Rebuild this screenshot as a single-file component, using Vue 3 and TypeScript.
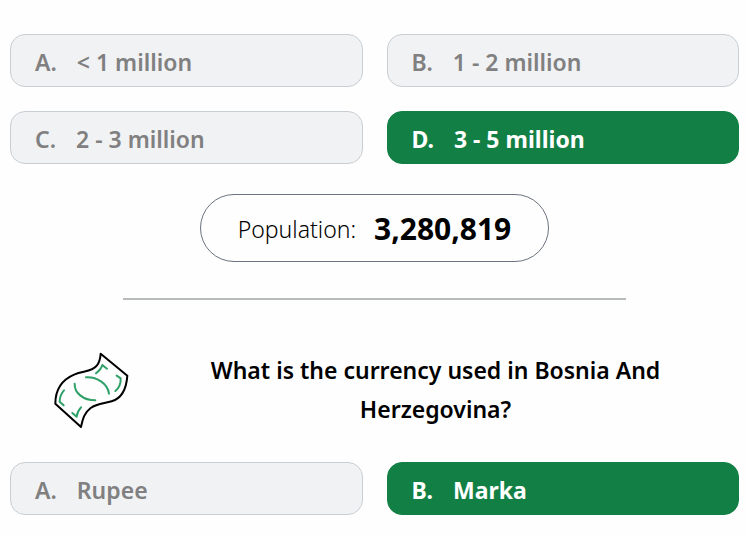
<script setup lang="ts">
interface Choice {
  letter: string
  text: string
  correct: boolean
}

const populationChoices: Choice[] = [
  { letter: 'A', text: '< 1 million', correct: false },
  { letter: 'B', text: '1 - 2 million', correct: false },
  { letter: 'C', text: '2 - 3 million', correct: false },
  { letter: 'D', text: '3 - 5 million', correct: true },
]

const currencyChoices: Choice[] = [
  { letter: 'A', text: 'Rupee', correct: false },
  { letter: 'B', text: 'Marka', correct: true },
]
</script>

<template>
  <main class="quiz">
    <section class="choices">
      <button
        v-for="choice in populationChoices"
        :key="choice.letter"
        type="button"
        class="choice"
        :class="{ correct: choice.correct }"
      >
        <span>{{ choice.letter }}.</span>
        <span>{{ choice.text }}</span>
      </button>
    </section>

    <p class="fact">
      <span>Population:</span>
      <strong>3,280,819</strong>
    </p>

    <hr class="divider" />

    <header class="question">
      <svg class="banknote" viewBox="35 32 234 234" fill="none" stroke-linecap="round" stroke-linejoin="round" aria-hidden="true">
        <path
          d="M181 40L261 106C258 148 245 174 214 183C190 190 170 190 151 203C130 219 127 238 122 260L45 190C45 146 67 117 103 102C127 91 155 95 170 75C178 65 180 54 181 40Z"
          stroke="#000" stroke-width="6"
        />
        <g stroke="#2fa168" stroke-width="6">
          <path d="M137 111C169 109 202 129 206 160" />
          <path d="M103 130C102 157 128 180 165 180" />
          <path d="M167 99C177 91 184 82 186 74L200 85" />
          <path d="M229 106L241 114C242 131 236 143 225 152" />
          <path d="M71 150C62 160 58 171 58 184L70 195" />
          <path d="M122 201C114 210 110 219 109 229L96 218" />
        </g>
      </svg>
      <h2>What is the currency used in Bosnia And Herzegovina?</h2>
    </header>

    <section class="choices">
      <button
        v-for="choice in currencyChoices"
        :key="choice.letter"
        type="button"
        class="choice"
        :class="{ correct: choice.correct }"
      >
        <span>{{ choice.letter }}.</span>
        <span>{{ choice.text }}</span>
      </button>
    </section>
  </main>
</template>

<style>
body {
  margin: 0;
  background: #fefefe;
}
</style>

<style scoped>
.quiz {
  display: flex;
  flex-direction: column;
  padding: 34px 7px 20px 10px;
  font-family: "Noto Sans", "Open Sans", sans-serif;
  color: #000;
}

.choices {
  display: grid;
  grid-template-columns: 1fr 1fr;
  gap: 24px;
}

.choice {
  display: flex;
  align-items: center;
  gap: 20px;
  box-sizing: border-box;
  min-height: 53px;
  padding: 2px 24px 0;
  border: 1px solid #c9ced2;
  border-radius: 15px;
  background: #f1f2f4;
  color: #808080;
  font: inherit;
  font-size: 23px;
  line-height: 32px;
  font-weight: 600;
  text-align: left;
}

.choice.correct {
  border-color: #127f45;
  background: #127f45;
  color: #fff;
  font-weight: 700;
}

.fact {
  display: flex;
  align-items: center;
  align-self: center;
  gap: 18px;
  box-sizing: border-box;
  min-height: 68px;
  margin: 30px 0 36px;
  padding: 2px 37px 0;
  border: 1px solid #6b7280;
  border-radius: 34px;
  font-size: 23px;
  line-height: 32px;
  font-weight: 300;
}

.fact strong {
  font-size: 30px;
  font-weight: 700;
}

.divider {
  width: 69%;
  height: 2px;
  margin: 0 auto;
  border: 0;
  background: #b8bbbc;
}

.question {
  display: flex;
  align-items: center;
  gap: 44px;
  margin: 51px 0 33px;
  padding: 0 42px;
}

.banknote {
  flex: none;
  width: 78px;
  height: 78px;
}

.question h2 {
  flex: 1;
  margin: 0;
  font-size: 23px;
  line-height: 39px;
  font-weight: 600;
  text-align: center;
}
</style>
